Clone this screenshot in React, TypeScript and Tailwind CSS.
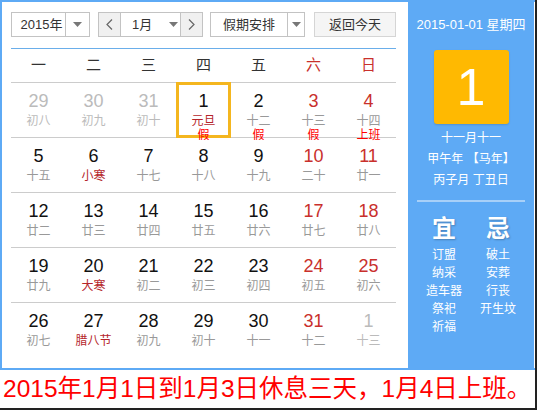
import React from "react";

type Day = {
  n: number;
  lunar: string;
  other?: boolean;
  red?: boolean;
  term?: boolean;
  tag?: string;
  today?: boolean;
};

const rows: Day[][] = [
  [
    { n: 29, lunar: "初八", other: true },
    { n: 30, lunar: "初九", other: true },
    { n: 31, lunar: "初十", other: true },
    { n: 1, lunar: "元旦", term: true, tag: "假", today: true },
    { n: 2, lunar: "十二", tag: "假" },
    { n: 3, lunar: "十三", red: true, tag: "假" },
    { n: 4, lunar: "十四", red: true, tag: "上班" },
  ],
  [
    { n: 5, lunar: "十五" },
    { n: 6, lunar: "小寒", term: true },
    { n: 7, lunar: "十七" },
    { n: 8, lunar: "十八" },
    { n: 9, lunar: "十九" },
    { n: 10, lunar: "二十", red: true },
    { n: 11, lunar: "廿一", red: true },
  ],
  [
    { n: 12, lunar: "廿二" },
    { n: 13, lunar: "廿三" },
    { n: 14, lunar: "廿四" },
    { n: 15, lunar: "廿五" },
    { n: 16, lunar: "廿六" },
    { n: 17, lunar: "廿七", red: true },
    { n: 18, lunar: "廿八", red: true },
  ],
  [
    { n: 19, lunar: "廿九" },
    { n: 20, lunar: "大寒", term: true },
    { n: 21, lunar: "初二" },
    { n: 22, lunar: "初三" },
    { n: 23, lunar: "初四" },
    { n: 24, lunar: "初五", red: true },
    { n: 25, lunar: "初六", red: true },
  ],
  [
    { n: 26, lunar: "初七" },
    { n: 27, lunar: "腊八节", term: true },
    { n: 28, lunar: "初九" },
    { n: 29, lunar: "初十" },
    { n: 30, lunar: "十一" },
    { n: 31, lunar: "十二", red: true },
    { n: 1, lunar: "十三", other: true },
  ],
];

const weekdays = ["一", "二", "三", "四", "五", "六", "日"];

function Caret() {
  return (
    <svg width="9" height="5" viewBox="0 0 9 5">
      <polygon points="0,0 9,0 4.5,5" fill="#777" />
    </svg>
  );
}

function Chevron({ dir }: { dir: "l" | "r" }) {
  return (
    <svg width="7" height="11" viewBox="0 0 7 11">
      <polyline
        points={dir === "l" ? "6,0.5 1,5.5 6,10.5" : "1,0.5 6,5.5 1,10.5"}
        fill="none"
        stroke="#666"
        strokeWidth="1.2"
      />
    </svg>
  );
}

function Cell({ d }: { d: Day }) {
  const numColor = d.other ? "text-[#bbbbbb]" : d.red ? "text-[#c9302c]" : "text-[#111]";
  const lunarColor = d.other
    ? "text-[#bbbbbb]"
    : d.term
    ? "text-[#b5262b]"
    : "text-[#999999]";
  return (
    <div className="relative h-[54px] flex flex-col items-center">
      {d.today && (
        <div className="absolute left-0 top-[-1px] w-full h-[56px] border-[3px] border-[#f4b61f] z-10" />
      )}
      <div className={`mt-[8px] h-[20px] leading-[20px] text-[18px] ${numColor}`}>{d.n}</div>
      <div className={`mt-[2px] h-[16px] leading-[16px] text-[12px] ${lunarColor}`}>{d.lunar}</div>
      {d.tag && (
        <div className="h-[13px] leading-[13px] text-[12px] text-[#ff0000] relative z-20">{d.tag}</div>
      )}
    </div>
  );
}

export default function App() {
  return (
    <div
      className="w-[537px] h-[410px] bg-white border-r-2 border-b-2 border-[#222] overflow-hidden"
      style={{ fontFamily: '"Liberation Sans", "Noto Sans CJK SC", sans-serif' }}
    >
      <div className="flex h-[370px] border-l-2 border-t-2 border-b-2 border-[#5eaaf5] pr-[1px]">
        {/* left calendar */}
        <div className="w-[406px] pl-[9px] pr-[12px] pt-[10px] bg-white">
          <div className="flex h-[25px] text-[13px] text-[#333]">
            <div className="w-[79px] flex border border-[#c3c3c3] bg-white">
              <div className="flex-1 flex items-center justify-center border-r border-[#c3c3c3] pl-[6px]">2015年</div>
              <div className="w-[23px] flex items-center justify-center">
                <Caret />
              </div>
            </div>
            <div className="ml-[8px] w-[105px] flex border border-[#c3c3c3]">
              <div className="w-[22px] bg-[#f0f0f0] border-r border-[#c3c3c3] flex items-center justify-center">
                <Chevron dir="l" />
              </div>
              <div className="flex-1 flex items-center bg-white pl-[11px]">
                <span>1月</span>
                <span className="ml-[17px] flex">
                  <Caret />
                </span>
              </div>
              <div className="w-[22px] bg-[#f0f0f0] border-l border-[#c3c3c3] flex items-center justify-center">
                <Chevron dir="r" />
              </div>
            </div>
            <div className="ml-[7px] w-[95px] flex border border-[#c3c3c3] bg-white">
              <div className="flex-1 flex items-center justify-center border-r border-[#c3c3c3]">假期安排</div>
              <div className="w-[16px] flex items-center justify-center">
                <Caret />
              </div>
            </div>
            <div className="ml-[9px] w-[82px] flex items-center justify-center border border-[#d5d5d5] bg-[#f5f5f5]">
              返回今天
            </div>
          </div>
          <div className="mt-[11px] h-[1px] bg-[#6aaeea]" />
          <div className="grid grid-cols-7 h-[34px] border-b border-[#cccccc] text-[15px]">
            {weekdays.map((w, i) => (
              <div
                key={w}
                className={`flex items-center justify-center ${i >= 5 ? "text-[#c9302c]" : "text-[#333]"}`}
              >
                {w}
              </div>
            ))}
          </div>
          {rows.map((r, ri) => (
            <div
              key={ri}
              className={`grid grid-cols-7 ${ri < rows.length - 1 ? "border-b border-[#cccccc]" : ""}`}
            >
              {r.map((d, di) => (
                <Cell key={di} d={d} />
              ))}
            </div>
          ))}
        </div>
        {/* right panel */}
        <div className="w-[126px] bg-[#5eaaf5] text-white flex flex-col items-center">
          <div className="mt-[15px] text-[13px] leading-[16px]">2015-01-01 星期四</div>
          <div className="mt-[17px] w-[75px] h-[74px] rounded-[3px] bg-[#ffb901] flex items-center justify-center text-[52px] leading-none shadow-[0_1px_2px_rgba(0,0,0,0.15)]">
            1
          </div>
          <div className="mt-[4px] text-[12px] leading-[21px] text-center">
            <div>十一月十一</div>
            <div>甲午年 【马年】</div>
            <div>丙子月 丁丑日</div>
          </div>
          <div className="mt-[9px] self-stretch mx-[9px] h-[2px] bg-[#a8d0f8]" />
          <div className="self-stretch px-[9px] grid grid-cols-2 mt-[13px]">
            <div className="flex flex-col items-center">
              <div className="text-[24px] leading-[28px] font-bold [text-shadow:1px_1px_2px_rgba(0,0,0,0.25)]">宜</div>
              <div className="mt-[3px] text-[12px] leading-[18px] text-center">
                <div>订盟</div>
                <div>纳采</div>
                <div>造车器</div>
                <div>祭祀</div>
                <div>祈福</div>
              </div>
            </div>
            <div className="flex flex-col items-center">
              <div className="text-[24px] leading-[28px] font-bold [text-shadow:1px_1px_2px_rgba(0,0,0,0.25)]">忌</div>
              <div className="mt-[3px] text-[12px] leading-[18px] text-center">
                <div>破土</div>
                <div>安葬</div>
                <div>行丧</div>
                <div>开生坟</div>
              </div>
            </div>
          </div>
        </div>
      </div>
      <div className="h-[38px] flex items-center pl-[3px] text-[24.5px] leading-[30px] text-[#ff0000] whitespace-nowrap">
        2015年1月1日到1月3日休息三天，1月4日上班。
      </div>
    </div>
  );
}
